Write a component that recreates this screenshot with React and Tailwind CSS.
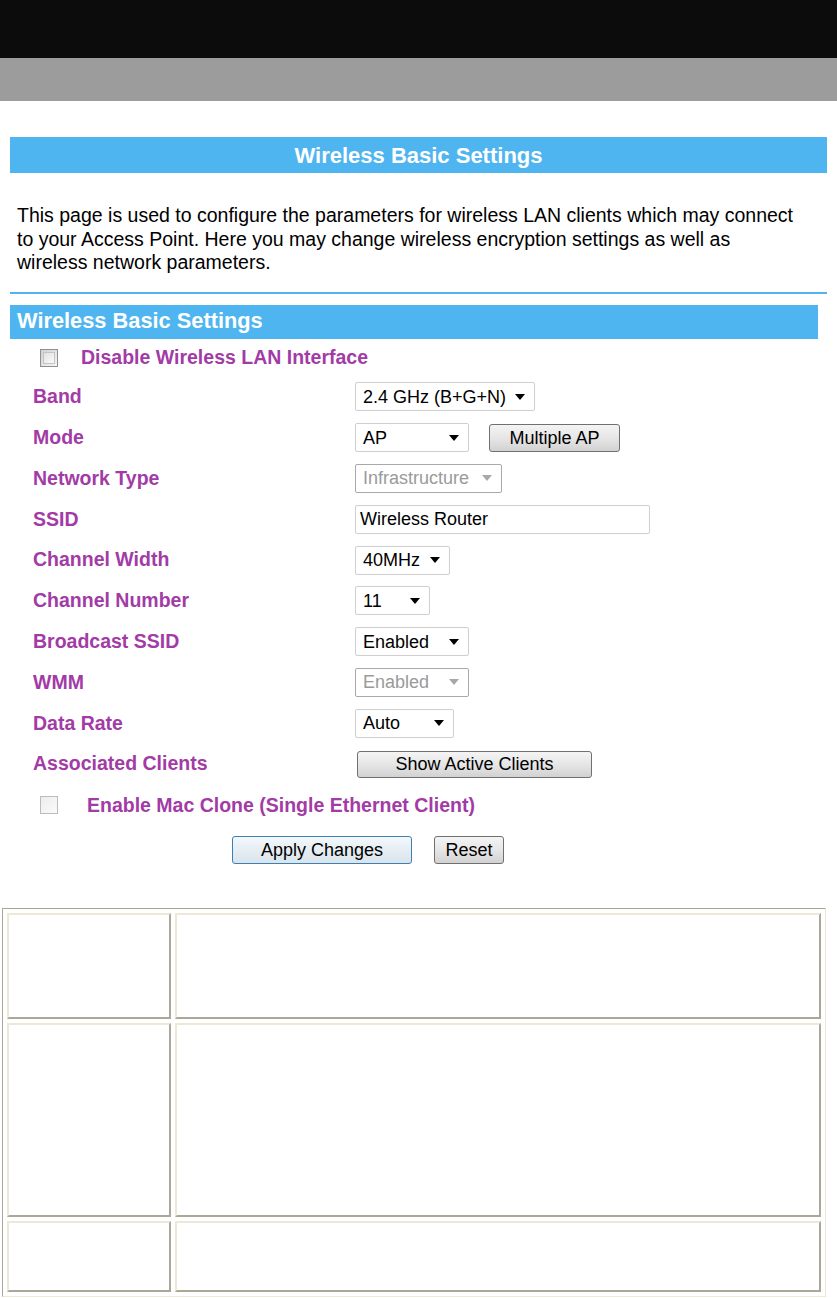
import { useState } from 'react'

const font = { fontFamily: '"Liberation Sans", Arial, Helvetica, sans-serif' }

// Small dropdown arrow, black when enabled, gray when disabled.
function Arrow({ disabled }) {
  return (
    <svg width="10" height="6" viewBox="0 0 10 6" className="shrink-0">
      <path d="M0 0h10L5 6z" fill={disabled ? '#a8a8a8' : '#000'} />
    </svg>
  )
}

function FakeSelect({ value, width, disabled }) {
  return (
    <div
      className={`flex h-[29px] items-center justify-between rounded-[2px] border bg-white pl-[7px] pr-[9px] text-[18px] ${
        disabled ? 'border-[#a9a9a9] text-[#9a9a9a]' : 'border-[#cfcfcf] text-black'
      }`}
      style={{ width }}
    >
      <span className="leading-none">{value}</span>
      <Arrow disabled={disabled} />
    </div>
  )
}

function Button({ children, className = '', primary }) {
  return (
    <button
      type="button"
      className={`flex items-center justify-center rounded-[3px] border text-[18px] leading-none text-black ${
        primary
          ? 'border-[#3c7fb1] bg-gradient-to-b from-[#f3f8fb] to-[#d9e4ec]'
          : 'border-[#707070] bg-gradient-to-b from-[#f4f4f4] via-[#e6e6e6] to-[#d2d2d2]'
      } ${className}`}
    >
      {children}
    </button>
  )
}

function Checkbox({ dark }) {
  return (
    <div
      className={`h-[18px] w-[18px] border ${
        dark
          ? 'border-[#8e8f8f] bg-gradient-to-br from-[#d0d0d0] to-[#f6f6f6] p-[2px]'
          : 'border-[#bcbcbc] bg-gradient-to-br from-[#ececec] to-[#fbfbfb]'
      }`}
    >
      {dark && <div className="h-full w-full border border-[#c4c4c4] bg-gradient-to-br from-[#e2e2e2] to-[#fafafa]" />}
    </div>
  )
}

function Row({ label, children }) {
  return (
    <div className="flex h-[40.8px] items-center pl-[33px]">
      <div className="w-[322px] text-[19.5px] font-bold text-[#a23ba6]">{label}</div>
      <div className="flex items-center gap-[20px]">{children}</div>
    </div>
  )
}

export default function App() {
  const [ssid, setSsid] = useState('Wireless Router')

  return (
    <div className="min-h-[1298px] bg-white" style={font}>
      <div className="h-[58px] bg-[#0c0c0c]" />
      <div className="h-[43px] bg-[#9c9c9c]" />

      <div className="mx-[10px] mt-[36px] flex h-[36px] items-center justify-center bg-[#4fb5f0] text-[22px] font-bold text-white">
        Wireless Basic Settings
      </div>

      <p className="ml-[17px] mt-[31px] whitespace-nowrap text-[19.5px] leading-[23.5px] text-black">
        This page is used to configure the parameters for wireless LAN clients which may connect
        <br />
        to your Access Point. Here you may change wireless encryption settings as well as
        <br />
        wireless network parameters.
      </p>

      <div className="mx-[10px] mt-[17px] h-[2px] bg-[#4fb5f0]" />

      <div className="ml-[10px] mr-[19px] mt-[11px] flex h-[34px] items-center bg-[#4fb5f0] pl-[7px] text-[21.8px] font-bold text-white">
        Wireless Basic Settings
      </div>

      <div className="flex h-[38px] items-center pl-[40px]">
        <Checkbox dark />
        <span className="ml-[23px] text-[19.5px] font-bold text-[#a23ba6]">
          Disable Wireless LAN Interface
        </span>
      </div>

      <Row label="Band">
        <FakeSelect value="2.4 GHz (B+G+N)" width={180} />
      </Row>
      <Row label="Mode">
        <FakeSelect value="AP" width={114} />
        <Button className="h-[28px] w-[131px]">Multiple AP</Button>
      </Row>
      <Row label="Network Type">
        <FakeSelect value="Infrastructure" width={147} disabled />
      </Row>
      <Row label="SSID">
        <input
          value={ssid}
          onChange={(e) => setSsid(e.target.value)}
          className="h-[29px] w-[295px] rounded-[2px] border border-[#cfcfcf] bg-white px-[4px] text-[18px] text-black outline-none"
          style={font}
        />
      </Row>
      <Row label="Channel Width">
        <FakeSelect value="40MHz" width={95} />
      </Row>
      <Row label="Channel Number">
        <FakeSelect value="11" width={75} />
      </Row>
      <Row label="Broadcast SSID">
        <FakeSelect value="Enabled" width={114} />
      </Row>
      <Row label="WMM">
        <FakeSelect value="Enabled" width={114} disabled />
      </Row>
      <Row label="Data Rate">
        <FakeSelect value="Auto" width={99} />
      </Row>
      <Row label="Associated Clients">
        <Button className="ml-[2px] h-[27px] w-[235px]">Show Active Clients</Button>
      </Row>

      <div className="flex h-[42px] items-center pl-[40px]">
        <Checkbox />
        <span className="ml-[29px] text-[19.5px] font-bold text-[#a23ba6]">
          Enable Mac Clone (Single Ethernet Client)
        </span>
      </div>

      <div className="flex h-[48px] items-center gap-[22px] pl-[232px]">
        <Button primary className="h-[28px] w-[180px]">Apply Changes</Button>
        <Button className="h-[28px] w-[70px]">Reset</Button>
      </div>

      <div className="ml-[2px] mt-[34px] w-[824px] border border-b-[#ece9d8] border-l-[#a9a695] border-r-[#ece9d8] border-t-[#a9a695] p-[4px]">
        <div className="grid grid-cols-[164px_1fr] grid-rows-[106px_194px_71px] gap-[4px]">
          {Array.from({ length: 6 }).map((_, i) => (
            <div
              key={i}
              className="border-2 border-b-[#aca899] border-l-[#ece9d8] border-r-[#aca899] border-t-[#ece9d8] bg-white"
            />
          ))}
        </div>
      </div>
    </div>
  )
}
